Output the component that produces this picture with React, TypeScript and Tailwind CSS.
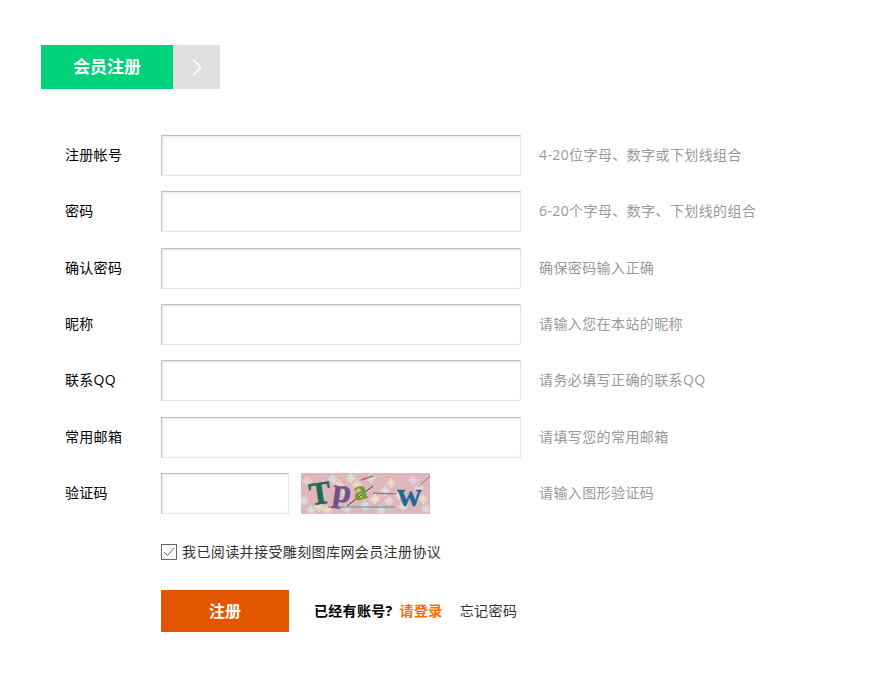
const fields = [
  { label: "注册帐号", hint: "4-20位字母、数字或下划线组合" },
  { label: "密码", hint: "6-20个字母、数字、下划线的组合" },
  { label: "确认密码", hint: "确保密码输入正确" },
  { label: "昵称", hint: "请输入您在本站的昵称" },
  { label: "联系QQ", hint: "请务必填写正确的联系QQ" },
  { label: "常用邮箱", hint: "请填写您的常用邮箱" },
];

const inputClass =
  "h-[41px] border border-t-[#bcbcbc] border-l-[#c4c4c4] border-r-[#e6e6e6] border-b-[#e6e6e6] bg-white shadow-[inset_1px_1px_3px_rgba(0,0,0,0.1)] outline-none";

const flakes = [
  [6, 8, "#e9d3d8"], [18, 34, "#e8e0c4"], [32, 6, "#d5dfe6"], [46, 36, "#e5d3e4"], [56, 12, "#eadfc8"],
  [70, 5, "#d6e4d6"], [80, 37, "#d4dfe8"], [90, 10, "#eed8cc"], [102, 33, "#d5e6de"], [112, 7, "#e2d2e6"],
  [122, 26, "#e8e0c4"], [3, 28, "#d6e4e4"], [64, 33, "#d4e2ea"], [98, 22, "#efe0e2"], [44, 20, "#d6e6d8"],
  [50, 5, "#d8e6d8"], [38, 12, "#ecdcc6"], [88, 28, "#e6d8ea"], [118, 15, "#d6e0ea"], [26, 37, "#ecdcc6"],
  [74, 26, "#efe4d0"], [125, 36, "#e2d6e4"], [10, 37, "#d6e4dc"], [84, 18, "#e2dcec"],
] as const;

function Captcha() {
  return (
    <svg width="129" height="41" viewBox="0 0 129 41" className="ml-3 shrink-0 bg-[#deb6bc]">
      {flakes.map(([x, y, c], i) => (
        <g key={i} stroke={c} strokeWidth="1.5">
          <line x1={x - 5} y1={y} x2={x + 5} y2={y} />
          <line x1={x} y1={y - 5} x2={x} y2={y + 5} />
          <line x1={x - 3} y1={y - 3} x2={x + 3} y2={y + 3} />
          <line x1={x - 3} y1={y + 3} x2={x + 3} y2={y - 3} />
        </g>
      ))}
      <line x1="27" y1="34" x2="94" y2="34" stroke="#4b9f8a" strokeWidth="1.2" />
      <line x1="46" y1="33" x2="72" y2="13" stroke="#3f3a58" strokeWidth="1" />
      <line x1="72" y1="20" x2="96" y2="21" stroke="#6d6a80" strokeWidth="1" />
      <line x1="60" y1="7" x2="72" y2="3" stroke="#a5706f" strokeWidth="1.6" />
      <line x1="117" y1="14" x2="129" y2="3" stroke="#8d7a80" strokeWidth="1" />
      <text x="8" y="31" fontFamily="'Liberation Serif', serif" fontWeight="700" fontSize="32" fill="#1f6b4d" stroke="#1f6b4d" strokeWidth="0.6" transform="rotate(-8 18 20)">T</text>
      <text x="32" y="29" fontFamily="'Liberation Serif', serif" fontWeight="700" fontSize="33" fill="#75508a" stroke="#75508a" strokeWidth="0.5" transform="rotate(8 42 20)">p</text>
      <text x="52" y="26" fontFamily="'Liberation Serif', serif" fontWeight="700" fontSize="27" fill="#6f9e26" stroke="#6f9e26" strokeWidth="0.4" transform="rotate(-14 60 18)">a</text>
      <text x="96" y="33" fontFamily="'Liberation Serif', serif" fontWeight="700" fontSize="34" fill="#1c6a96" stroke="#1c6a96" strokeWidth="0.3">w</text>
    </svg>
  );
}

export default function App() {
  return (
    <div className="min-h-[678px] bg-white pt-[45px] pl-[41px] text-[14px] font-['Open_Sans','Noto_Sans_CJK_SC',sans-serif] text-black">
      <div className="flex h-11 w-[179px]">
        <div className="flex w-[132px] items-center justify-center bg-[#00d27a] text-[17px] font-bold text-white">
          会员注册
        </div>
        <div className="flex flex-1 items-center justify-center bg-[#e0e0e0]">
          <svg width="10" height="17" viewBox="0 0 10 17" fill="none" stroke="#fff" strokeWidth="1.4">
            <path d="M1 .5l8 8-8 8" />
          </svg>
        </div>
      </div>

      <form className="mt-[46px] flex flex-col gap-[15.33px]">
        {fields.map((f) => (
          <div key={f.label} className="flex h-[41px] items-center">
            <label className="w-[120px] pb-0.5 pl-6 tracking-[0.3px]">{f.label}</label>
            <input className={`${inputClass} w-[360px]`} />
            <span className="ml-[18px] pb-0.5 tracking-[0.4px] text-[#999]">{f.hint}</span>
          </div>
        ))}
        <div className="flex h-[41px] items-center">
          <label className="w-[120px] pb-0.5 pl-6 tracking-[0.3px]">验证码</label>
          <input className={`${inputClass} w-[128px]`} />
          <Captcha />
          <span className="ml-[109px] pb-0.5 tracking-[0.4px] text-[#999]">请输入图形验证码</span>
        </div>
      </form>

      <div className="mt-[30px] ml-[120px] flex h-4 items-center gap-[5px]">
        <span className="flex h-4 w-4 items-center justify-center border border-[#666] bg-white">
          <svg width="12" height="10" viewBox="0 0 12 10" fill="none" stroke="#666" strokeWidth="1">
            <path d="M1 5l3.5 3.5L11 1" />
          </svg>
        </span>
        <span className="tracking-[0.4px] text-[#333]">我已阅读并接受雕刻图库网会员注册协议</span>
      </div>

      <div className="mt-[30px] ml-[120px] flex h-[42px] items-center">
        <button type="button" className="h-full w-32 bg-[#e25600] text-[16px] font-bold text-white">
          注册
        </button>
        <span className="ml-[25px] font-bold tracking-[0.3px]">已经有账号?</span>
        <a className="ml-[7px] font-bold tracking-[0.4px] text-[#ff6a00]">请登录</a>
        <a className="ml-[17px] tracking-[0.4px] text-[#333]">忘记密码</a>
      </div>
    </div>
  );
}
